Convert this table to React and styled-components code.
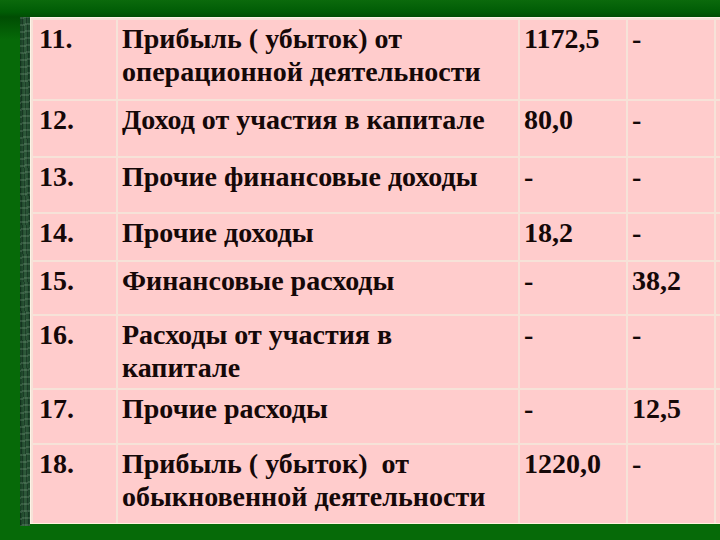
import React from 'react';
import styled, { createGlobalStyle } from 'styled-components';

const Global = createGlobalStyle`
	body {
		margin: 0;
		background: #066a08;
	}
`;

const Slide = styled.div`
	display: flex;
	width: 720px;
	height: 540px;
	box-sizing: border-box;
	padding: 17px 0 0 20px;
	background: linear-gradient(180deg, #0b6a0c 0px, #005c05 12px, #004d03 17px, #066a08 40px, #066a08 100%);
	overflow: hidden;
`;

const Edge = styled.div`
	width: 10px;
	height: 509px;
	flex: none;
	background:
		repeating-linear-gradient(173deg, rgba(160, 190, 165, 0.2) 0 2px, transparent 2px 7px),
		repeating-linear-gradient(88deg, rgba(10, 30, 20, 0.45) 0 1px, transparent 1px 4px),
		linear-gradient(90deg, #163d22, #2f5a3b 50%, #1b4429);
`;

const Table = styled.div`
	display: grid;
	grid-template-columns: 83px 400px 106px 86px 1fr;
	grid-template-rows: 79px 55px 54px 46px 52px 72px 53px 78px;
	gap: 2px;
	padding: 2px;
	width: 690px;
	height: 507px;
	box-sizing: border-box;
	flex: none;
	background: #f6e2d8;
	border-top: 1px solid #fbf3e6;
	border-left: 1px solid #fbf3e6;
	border-bottom: 1px solid #fff4dc;
`;

const Cell = styled.div`
	background: #ffcccc;
	padding-top: 2px;
	padding-left: ${(p) => p.$pad}px;
	font-family: "Liberation Serif", serif;
	font-weight: bold;
	font-size: ${(p) => p.$size}px;
	line-height: 33px;
	white-space: pre-line;
	color: #150808;
`;

const rows = [
	['11.', 'Прибыль ( убыток) от\nоперационной деятельности', '1172,5', '-'],
	['12.', 'Доход от участия в капитале', '80,0', '-'],
	['13.', 'Прочие финансовые доходы', '-', '-'],
	['14.', 'Прочие доходы', '18,2', '-'],
	['15.', 'Финансовые расходы', '-', '38,2'],
	['16.', 'Расходы от участия в\nкапитале', '-', '-'],
	['17.', 'Прочие расходы', '-', '12,5'],
	['18.', 'Прибыль ( убыток)\u00a0 от\nобыкновенной деятельности', '1220,0', '-'],
];

export default function App() {
	return (
		<>
			<Global />
			<Slide>
				<Edge />
				<Table>
					{rows.map((r) => (
						<React.Fragment key={r[0]}>
							<Cell $pad={6} $size={28}>{r[0]}</Cell>
							<Cell $pad={4} $size={28}>{r[1]}</Cell>
							<Cell $pad={4} $size={28}>{r[2]}</Cell>
							<Cell $pad={4} $size={28}>{r[3]}</Cell>
							<Cell $pad={4} $size={28} />
						</React.Fragment>
					))}
				</Table>
			</Slide>
		</>
	);
}
